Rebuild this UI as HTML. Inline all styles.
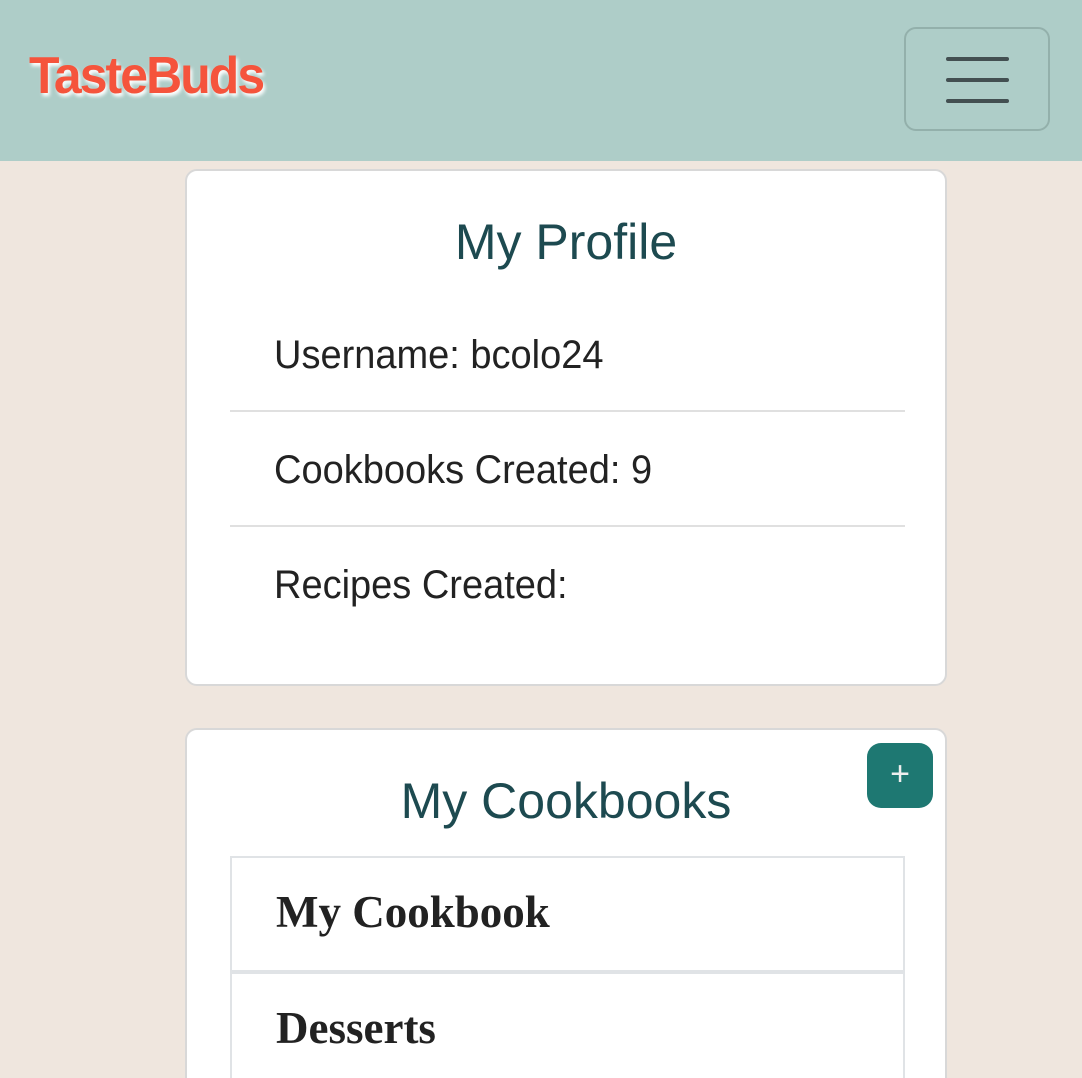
<!DOCTYPE html>
<html><head><style>
html,body{margin:0;width:1082px;height:1078px;overflow:hidden}
body{background:#efe6de;font-family:"Liberation Sans",sans-serif;position:relative}
.hdr{position:absolute;left:0;top:0;width:1082px;height:161px;background:#aecdc8}
.logo{position:absolute;left:29px;top:46px;font:bold 52px "Liberation Sans",sans-serif;color:#f5543c;letter-spacing:-2px;text-shadow:2px 3px 4px #fff;transform:scaleX(0.96);transform-origin:left}
.burger{position:absolute;left:904px;top:27px;width:142px;height:100px;border:2px solid #93b0ab;border-radius:12px}
.burger i{position:absolute;left:40px;width:63px;height:4px;background:#434f51;border-radius:2px}
.card{position:absolute;left:185px;width:758px;background:#fff;border:2px solid #d8d8d8;border-radius:12px}
.title{position:absolute;left:0;width:100%;text-align:center;font-size:50px;color:#1d4a50}
.row{position:absolute;left:87px;font-size:40px;color:#222;transform:scaleX(0.95);transform-origin:left}
.hr{position:absolute;left:43px;width:675px;height:2px;background:#e0e0e0}
.plus{position:absolute;left:680px;top:13px;width:66px;height:65px;background:#1e7872;border-radius:14px;color:#eee;font-size:34px;text-align:center;line-height:62px}
.list{position:absolute;left:43px;top:126px;width:671px;height:300px;border:2px solid #e0e3e6;border-bottom:none}
.item{position:absolute;left:44px;font:bold 45px "Liberation Serif",serif;color:#222}
</style></head><body>
<div class="hdr"><div class="logo">TasteBuds</div>
<div class="burger"><i style="top:28px"></i><i style="top:49px"></i><i style="top:70px"></i></div></div>
<div class="card" style="top:169px;height:513px">
<div class="title" style="top:42px">My Profile</div>
<div class="row" style="top:162px">Username: bcolo24</div>
<div class="hr" style="top:239px"></div>
<div class="row" style="top:277px">Cookbooks Created: 9</div>
<div class="hr" style="top:354px"></div>
<div class="row" style="top:392px">Recipes Created:</div>
</div>
<div class="card" style="top:728px;height:400px">
<div class="plus">+</div>
<div class="title" style="top:42px">My Cookbooks</div>
<div class="list">
<div class="item" style="top:28px">My Cookbook</div>
<div style="position:absolute;left:0;top:112px;width:671px;height:4px;background:#e0e3e6"></div>
<div class="item" style="top:144px">Desserts</div>
</div>
</div>
</body></html>
